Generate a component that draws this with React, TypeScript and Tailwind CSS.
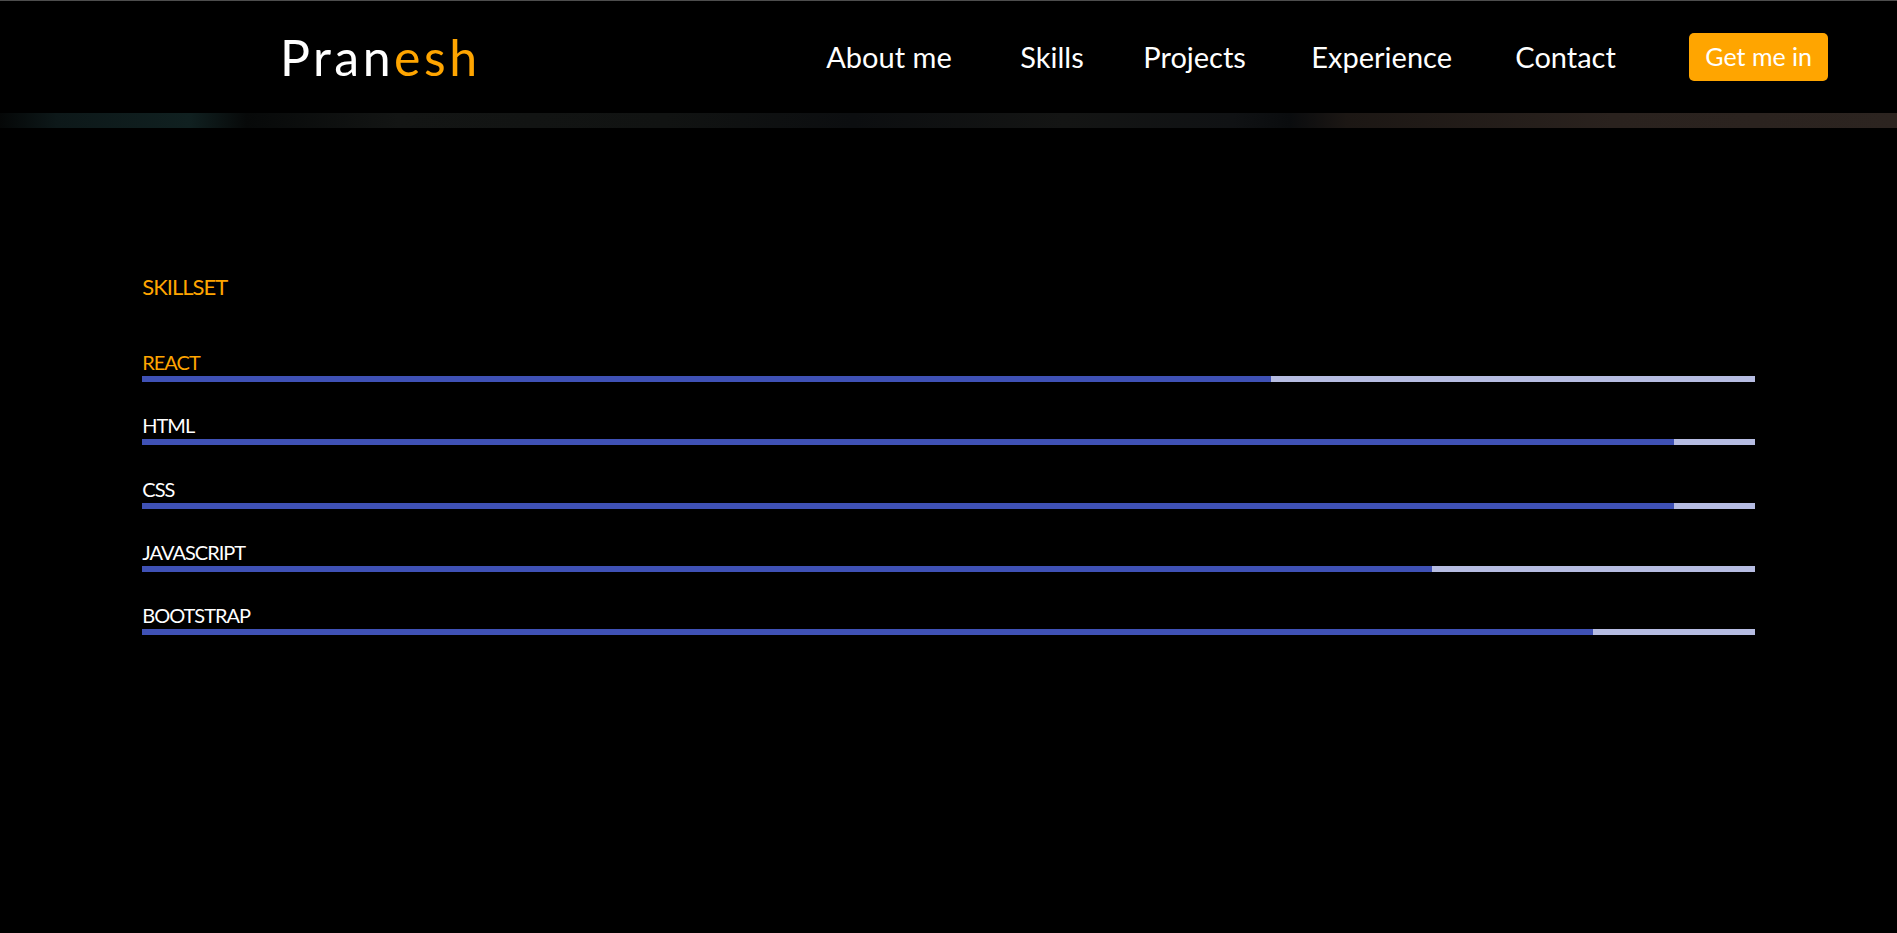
const NAV = [
  { label: "About me", width: "w-[124px]" },
  { label: "Skills", width: "w-[53px]" },
  { label: "Projects", width: "w-[98px]" },
  { label: "Experience", width: "w-[134px]" },
  { label: "Contact", width: "w-[104px]" },
];

const SKILLS: { name: string; value: number; active?: boolean }[] = [
  { name: "REACT", value: 70, active: true },
  { name: "HTML", value: 95 },
  { name: "CSS", value: 95 },
  { name: "JAVASCRIPT", value: 80 },
  { name: "BOOTSTRAP", value: 90 },
];

function Header() {
  return (
    <header className="flex h-[113px] items-center justify-between border-t border-[#4d4d4d] bg-black pl-[280px] pr-[69px]">
      <a href="#" className="text-[50px] tracking-[3.5px] text-white">
        Pran<span className="text-[#ffa500]">esh</span>
      </a>
      <nav className="flex items-center gap-[70px]">
        {NAV.map((item) => (
          <a key={item.label} href="#" className={`${item.width} whitespace-nowrap text-[29px] text-white`}>
            {item.label}
          </a>
        ))}
        <button className="h-12 rounded-[5px] bg-[#ffa500] px-4 text-[25px] text-white">
          Get me in
        </button>
      </nav>
    </header>
  );
}

function SkillBar({ name, value, active }: { name: string; value: number; active?: boolean }) {
  return (
    <div className="mb-[29.25px]">
      <p className={`text-[20px] leading-[28px] tracking-[-1px] ${active ? "text-[#ffa500]" : "text-white"}`}>{name}</p>
      <div className="h-[6px] bg-[#b6bce2]">
        <div className="h-full bg-[#3f51b5]" style={{ width: `${value}%` }} />
      </div>
    </div>
  );
}

export default function App() {
  return (
    <div className="min-h-screen bg-black font-[Lato,Roboto,sans-serif]">
      <Header />
      <div className="h-[15px] bg-[linear-gradient(90deg,#050707_0%,#0d1819_3%,#102020_10%,#070909_13%,#131514_21%,#111312_35%,#0c0e10_45%,#141514_56%,#101214_65%,#0a0c0e_68%,#1c1714_71%,#2a221e_85%,#2c2420_100%)]" />
      <section className="mx-auto w-[85%] pt-[143px]">
        <h2 className="mb-[45px] text-[22px] leading-[32px] tracking-[-1px] text-[#ffa500]">SKILLSET</h2>
        {SKILLS.map((s) => (
          <SkillBar key={s.name} {...s} />
        ))}
      </section>
    </div>
  );
}
